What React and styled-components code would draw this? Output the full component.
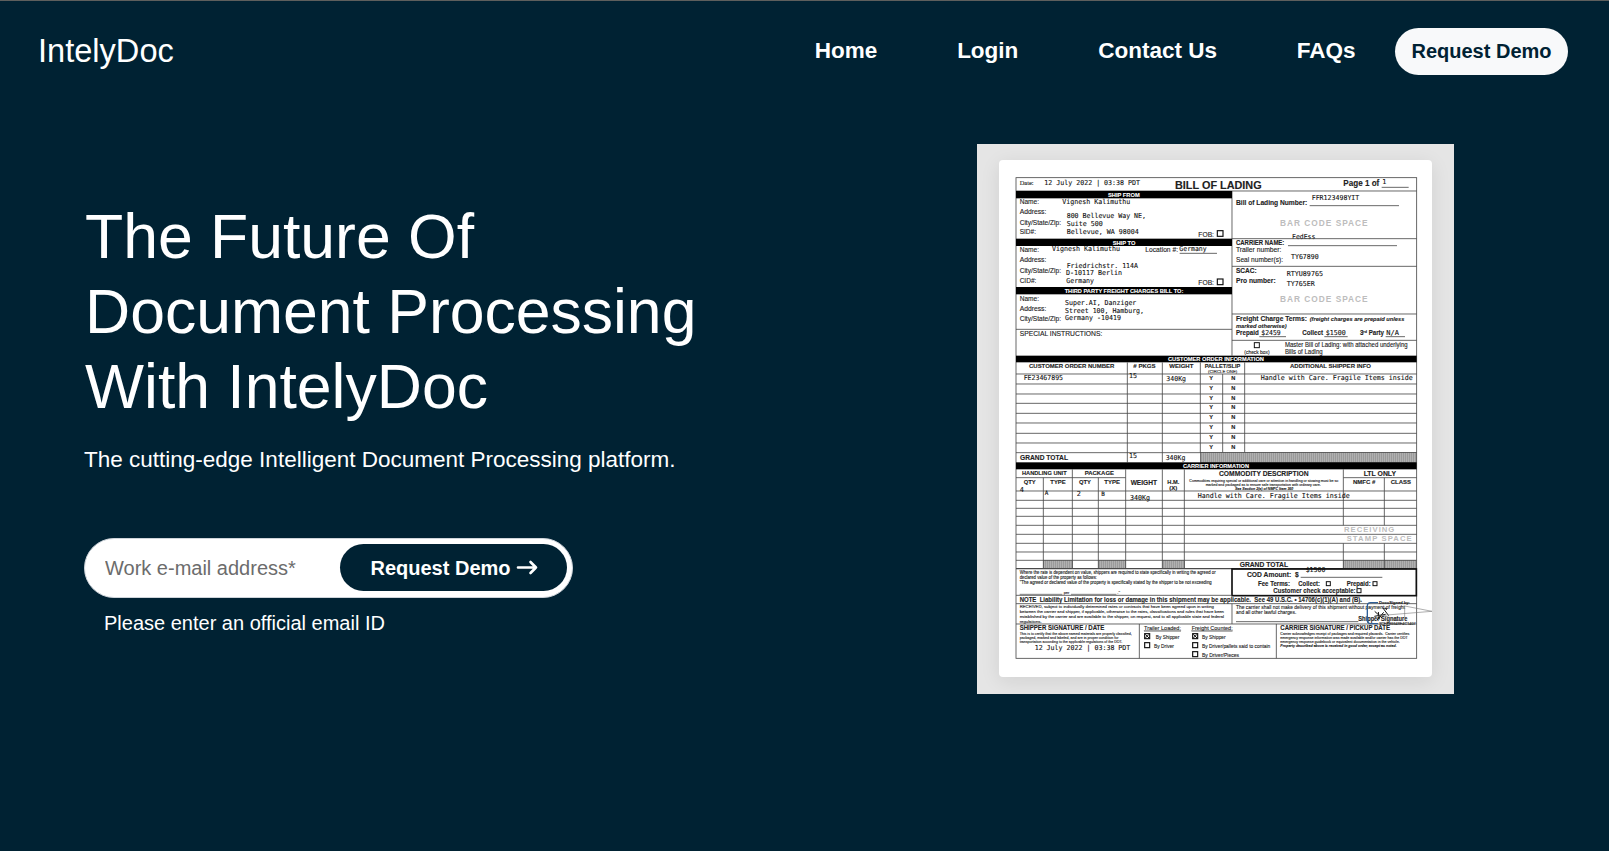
import React from 'react';
import styled, { createGlobalStyle } from 'styled-components';

const NAVY = '#002233';

const GlobalStyle = createGlobalStyle`
  *, *::before, *::after { box-sizing: border-box; }
  body {
    margin: 0;
    background: ${NAVY};
    color: #fff;
    font-family: "Liberation Sans", Arial, sans-serif;
  }
`;

const Page = styled.div`
  height: 851px;
  overflow: hidden;
  border-top: 1px solid #5e5f5d;
  background: ${NAVY};
`;

const Header = styled.header`
  display: flex;
  align-items: center;
  justify-content: space-between;
  height: 100px;
  padding: 0 41px 0 38px;
`;

const Brand = styled.a`
  font-size: 32.6px;
  line-height: 40px;
  color: #fff;
`;

const Nav = styled.nav`
  display: flex;
  align-items: center;
`;

const NavLink = styled.a`
  margin-right: ${(p) => (p.$last ? 39.5 : 79.8)}px;
  font-size: 22.5px;
  font-weight: 700;
  line-height: 30px;
  color: #fff;
`;

const PillButton = styled.button`
  display: flex;
  align-items: center;
  justify-content: center;
  gap: 5px;
  width: ${(p) => p.$width}px;
  height: 47px;
  padding: ${(p) => (p.$light ? '0' : '1px 0 0 1px')};
  border: 0;
  border-radius: 24px;
  background: ${(p) => (p.$light ? '#f8f9fa' : NAVY)};
  color: ${(p) => (p.$light ? NAVY : '#fff')};
  font: 700 20px "Liberation Sans", Arial, sans-serif;
`;

const Hero = styled.main`
  display: flex;
  justify-content: space-between;
  padding: 43px 155px 0 84px;
`;

const Intro = styled.section`
  width: 660px;
  padding-top: 55px;
`;

const Title = styled.h1`
  margin: 0;
  padding-left: 1px;
  font-size: 62.5px;
  font-weight: 400;
  line-height: 75px;
`;

const Lead = styled.p`
  margin: 20px 0 0;
  font-size: 22.5px;
  line-height: 32px;
  white-space: nowrap;
`;

const EmailForm = styled.form`
  display: flex;
  align-items: center;
  justify-content: space-between;
  width: 489px;
  height: 60px;
  margin-top: 62px;
  padding: 0 5px 1px 20px;
  border: 1px solid #ced4da;
  border-radius: 30px;
  background: #fff;
`;

const EmailInput = styled.input`
  width: 220px;
  padding: 2px 0 0;
  border: 0;
  outline: 0;
  background: transparent;
  font: 20px "Liberation Sans", Arial, sans-serif;
  &::placeholder { color: #6c6c6c; opacity: 1; }
`;

const Hint = styled.p`
  margin: 13px 0 0 20px;
  font-size: 20px;
  line-height: 24px;
`;

const Figure = styled.figure`
  display: flex;
  justify-content: center;
  width: 477px;
  height: 550px;
  margin: 0;
  padding-top: 16px;
  background: #e5e5e5;
`;

const Sheet = styled.div`
  width: 433px;
  height: 517px;
  border-radius: 4px;
  background: #fff;
  box-shadow: 0 4px 20px rgba(0, 0, 0, 0.09);
`;

const Drawing = styled.svg`
  display: block;
  width: 433px;
  height: 516.67px;
`;

const FAMILIES = {
  sans: 'Liberation Sans, Arial, sans-serif',
  mono: 'DejaVu Sans Mono, monospace',
  serif: 'Liberation Serif, serif',
};

function T({ x, y, w, s = 20, b, i, f = 'sans', c = '#222', u, children }) {
  return (
    <text
      x={x}
      y={y}
      fontSize={s}
      textLength={w}
      lengthAdjust="spacingAndGlyphs"
      fontWeight={b ? 700 : 400}
      fontStyle={i ? 'italic' : 'normal'}
      fontFamily={FAMILIES[f]}
      textDecoration={u ? 'underline' : undefined}
      fill={c}
      stroke={c}
      strokeWidth="0.35"
    >
      {children}
    </text>
  );
}

const M = (p) => <T s={20.5} f="mono" c="#111" {...p} />;
const B = (p) => <T b {...p} />;
const Stamp = ({ x, y, w, s = 25, children }) => (
  <text x={x} y={y} fontSize={s} fontWeight="700" textLength={w} fontFamily={FAMILIES.sans} fill="#bdbdbd">
    {children}
  </text>
);
const H = ({ y, x1 = 117, x2 = 1319, t = 2.5 }) => (
  <line x1={x1} x2={x2} y1={y} y2={y} stroke="#4a4a4a" strokeWidth={t} />
);
const V = ({ x, y1, y2, t = 2.5 }) => (
  <line x1={x} x2={x} y1={y1} y2={y2} stroke="#4a4a4a" strokeWidth={t} />
);
const Bar = ({ y, x2 = 1319, h = 22 }) => <rect x="117" y={y} width={x2 - 117} height={h} fill="#000" />;
const Box = ({ x, y, s = 17, t = 3.5 }) => (
  <rect x={x + 1} y={y + 1} width={s - 2} height={s - 2} fill="none" stroke="#111" strokeWidth={t} />
);
const Checked = ({ x, y }) => (
  <g>
    <Box x={x} y={y} />
    <path d={`M${x + 3} ${y + 3}l11 11m0-11l-11 11`} stroke="#111" strokeWidth="3" />
  </g>
);
const Hatch = ({ x1, x2, y, h }) => <rect x={x1} y={y} width={x2 - x1} height={h} fill="url(#hatch)" stroke="#4a4a4a" strokeWidth="2" />;

const ORDER_ROWS = [690, 720, 750, 778, 808, 837, 868, 897];
const CARGO_ROWS = [1041, 1069, 1093, 1117, 1144, 1171, 1198, 1224, 1249];

function Parties() {
  return (
    <g>
      <T x={128} y={123} w={42} s={20} f="serif">Date:</T>
      <M x={202} y={123} w={287}>12 July 2022 | 03:38 PDT</M>
      <B x={594} y={134} w={260} s={32.5}>BILL OF LADING</B>
      <B x={1099} y={126} w={108} s={24.5}>Page 1 of</B>
      <M x={1216} y={119}>1</M>
      <H x1={1214} x2={1295} y={130} />
      <H y={141} />
      <V x={765} y1={141} y2={635} />

      <Bar y={141} x2={765} />
      <B x={393} y={159} w={95} s={17.5} c="#fff">SHIP FROM</B>
      <T x={128} y={181} w={58}>Name:</T>
      <M x={256} y={179} w={204}>Vignesh Kalimuthu</M>
      <T x={128} y={211} w={80}>Address:</T>
      <T x={128} y={242} w={124}>City/State/Zip:</T>
      <T x={128} y={271} w={49}>SID#:</T>
      <M x={269} y={223} w={238}>800 Bellevue Way NE,</M>
      <M x={269} y={246} w={108}>Suite 500</M>
      <M x={269} y={269} w={216}>Bellevue, WA 98004</M>
      <T x={664} y={278} w={47}>FOB:</T>
      <Box x={720} y={259} s={19} />

      <Bar y={284} x2={765} />
      <B x={407} y={302} w={68} s={17.5} c="#fff">SHIP TO</B>
      <T x={128} y={325} w={58}>Name:</T>
      <M x={225} y={322} w={204}>Vignesh Kalimuthu</M>
      <T x={505} y={325} w={98}>Location #:</T>
      <M x={607} y={321} w={82}>Germany</M>
      <H x1={608} x2={720} y={328} />
      <T x={128} y={355} w={80}>Address:</T>
      <T x={128} y={386} w={124}>City/State/Zip:</T>
      <T x={128} y={416} w={50}>CID#:</T>
      <M x={269} y={372} w={214}>Friedrichstr. 114A</M>
      <M x={267} y={394} w={168}>D-10117 Berlin</M>
      <M x={268} y={418} w={83}>Germany</M>
      <T x={664} y={422} w={47}>FOB:</T>
      <Box x={720} y={404} s={19} />

      <Bar y={429} x2={765} />
      <B x={263} y={447} w={356} s={17.5} c="#fff">THIRD PARTY FREIGHT CHARGES BILL TO:</B>
      <T x={128} y={470} w={58}>Name:</T>
      <T x={128} y={500} w={80}>Address:</T>
      <T x={128} y={530} w={124}>City/State/Zip:</T>
      <M x={264} y={483} w={214}>Super.AI, Danziger</M>
      <M x={264} y={506} w={237}>Street 100, Hamburg,</M>
      <M x={264} y={529} w={168}>Germany -10419</M>
      <H x2={765} y={556} />
      <T x={128} y={576} w={248}>SPECIAL INSTRUCTIONS:</T>
    </g>
  );
}

function Terms() {
  return (
    <g>
      <B x={777} y={183} w={214} s={21}>Bill of Lading Number:</B>
      <M x={1004} y={168} w={143}>FFR123498YIT</M>
      <H x1={998} x2={1266} y={185} />
      <Stamp x={909} y={246} w={263}>BAR CODE SPACE</Stamp>
      <M x={945} y={285} w={70}>FedEss</M>
      <H x1={765} y={284} />
      <B x={777} y={302} w={145} s={19}>CARRIER NAME:</B>
      <H x1={933} x2={1260} y={305} />
      <T x={777} y={325} w={136}>Trailer number:</T>
      <T x={777} y={354} w={141}>Seal number(s):</T>
      <M x={942} y={345} w={83}>TY67890</M>
      <H x1={765} y={367} />
      <B x={777} y={386} w={62}>SCAC:</B>
      <B x={777} y={416} w={119}>Pro number:</B>
      <M x={929} y={396} w={109}>RTYU89765</M>
      <M x={929} y={426} w={84}>TY765ER</M>
      <Stamp x={909} y={474} w={263}>BAR CODE SPACE</Stamp>
      <H x1={765} y={510} />
      <B x={777} y={531} w={213} s={20.5}>Freight Charge Terms:</B>
      <B x={998} y={530} w={284} s={18} i>(freight charges are prepaid unless</B>
      <B x={777} y={552} w={152} s={18} i>marked otherwise)</B>
      <B x={777} y={574} w={68} s={19}>Prepaid</B>
      <M x={853} y={573} w={58}>$2459</M>
      <H x1={847} x2={927} y={578} />
      <B x={976} y={574} w={62} s={19}>Collect</B>
      <M x={1046} y={572} w={60}>$1500</M>
      <H x1={1042} x2={1112} y={578} />
      <B x={1149} y={574} s={19}>3</B>
      <B x={1159} y={566} s={11}>rd</B>
      <B x={1175} y={574} w={46} s={19}>Party</B>
      <M x={1228} y={574} w={38}>N/A</M>
      <H x1={1226} x2={1284} y={578} />
      <H x1={765} y={589} />
      <Box x={831} y={595} s={17} t={3} />
      <T x={802} y={631} w={76} s={15}>(check box)</T>
      <T x={924} y={608} w={368} s={19}>Master Bill of Lading: with attached underlying</T>
      <T x={924} y={629} w={113} s={19}>Bills of Lading</T>
    </g>
  );
}

function Orders() {
  return (
    <g>
      <Bar y={635} h={20} />
      <B x={573} y={651} w={288} s={17} c="#fff">CUSTOMER ORDER INFORMATION</B>
      <B x={156} y={671} w={256} s={18}>CUSTOMER ORDER NUMBER</B>
      <B x={469} y={671} w={67} s={18}># PKGS</B>
      <B x={577} y={671} w={72} s={18}>WEIGHT</B>
      <B x={683} y={671} w={107} s={18}>PALLET/SLIP</B>
      <T x={693} y={687} w={88} s={13}>(CIRCLE ONE)</T>
      <B x={939} y={672} w={243} s={18}>ADDITIONAL SHIPPER INFO</B>
      {ORDER_ROWS.map((y) => (
        <g key={y}>
          <H y={y} />
          <B x={697} y={y + 18} s={17}>Y</B>
          <B x={763} y={y + 18} s={17}>N</B>
        </g>
      ))}
      <V x={451} y1={655} y2={955} />
      <V x={556} y1={655} y2={955} />
      <V x={670} y1={655} y2={926} />
      <V x={737} y1={690} y2={926} />
      <V x={803} y1={655} y2={926} />
      <H y={926} />
      <M x={140} y={707} w={118}>FE23467895</M>
      <M x={456} y={703} w={24}>15</M>
      <M x={568} y={712} w={59}>340Kg</M>
      <M x={851} y={708} w={456}>Handle with Care. Fragile Items inside</M>
      <B x={129} y={948} w={144}>GRAND TOTAL</B>
      <M x={456} y={943} w={24}>15</M>
      <M x={566} y={947} w={59}>340Kg</M>
      <Hatch x1={670} x2={1319} y={926} h={29} />
    </g>
  );
}

function Cargo() {
  return (
    <g>
      <Bar y={955} h={21} />
      <B x={618} y={972} w={198} s={17} c="#fff">CARRIER INFORMATION</B>
      <B x={135} y={994} w={134} s={18}>HANDLING UNIT</B>
      <B x={323} y={994} w={88} s={18}>PACKAGE</B>
      <H x2={446} y={1001} />
      <B x={140} y={1020} w={36} s={18}>QTY</B>
      <B x={220} y={1020} w={46} s={18}>TYPE</B>
      <B x={306} y={1020} w={36} s={18}>QTY</B>
      <B x={382} y={1020} w={47} s={18}>TYPE</B>
      <B x={461} y={1024} w={79}>WEIGHT</B>
      <B x={571} y={1019} w={36} s={18}>H.M.</B>
      <B x={577} y={1039} w={24} s={18}>(X)</B>
      <B x={726} y={997} w={269} s={21}>COMMODITY DESCRIPTION</B>
      <T x={637} y={1013} w={447} s={11}>Commodities requiring special or additional care or attention in handling or stowing must be so</T>
      <T x={686} y={1025} w={345} s={11}>marked and packaged as to ensure safe transportation with ordinary care.</T>
      <B x={774} y={1037} w={175} s={11} i>See Section 2(e) of NMFC Item 360</B>
      <B x={1160} y={996} w={97}>LTL ONLY</B>
      <H x1={1099} y={1001} />
      <B x={1128} y={1020} w={67} s={18}>NMFC #</B>
      <B x={1241} y={1020} w={61} s={18}>CLASS</B>
      {CARGO_ROWS.map((y) => <H key={y} y={y} />)}
      <V x={199} y1={1001} y2={1273} />
      <V x={286} y1={976} y2={1273} />
      <V x={364} y1={1001} y2={1273} />
      <V x={446} y1={976} y2={1273} />
      <V x={556} y1={976} y2={1273} />
      <V x={622} y1={976} y2={1273} />
      <V x={1099} y1={976} y2={1144} />
      <V x={1222} y1={1001} y2={1144} />
      <V x={1099} y1={1198} y2={1273} />
      <V x={1222} y1={1198} y2={1273} />
      <Hatch x1={199} x2={286} y={1249} h={24} />
      <Hatch x1={364} x2={446} y={1249} h={24} />
      <Hatch x1={556} x2={622} y={1249} h={24} />
      <Hatch x1={1099} x2={1222} y={1249} h={24} />
      <Hatch x1={1222} x2={1319} y={1249} h={24} />
      <M x={128} y={1045}>4</M>
      <M x={203} y={1054} s={18}>A</M>
      <M x={299} y={1057}>2</M>
      <M x={373} y={1056} s={18}>B</M>
      <M x={459} y={1068} w={60}>340Kg</M>
      <M x={662} y={1063} w={456}>Handle with Care. Fragile Items inside</M>
      <Stamp x={1101} y={1164} w={151} s={23}>RECEIVING</Stamp>
      <Stamp x={1109} y={1192} w={195} s={23}>STAMP SPACE</Stamp>
      <B x={788} y={1268} w={145}>GRAND TOTAL</B>
    </g>
  );
}

function Footing() {
  return (
    <g>
      <H y={1274} t={4} />
      <rect x="765" y="1275" width="553" height="80" fill="none" stroke="#111" strokeWidth="5" />
      <B x={810} y={1298} w={155} s={21}>{'COD Amount:\u00a0 $'}</B>
      <M x={986} y={1283} w={59}>$1500</M>
      <H x1={971} x2={1216} y={1300} />
      <B x={843} y={1325} w={96} s={19}>Fee Terms:</B>
      <B x={964} y={1325} w={65} s={19}>Collect:</B>
      <Box x={1047} y={1312} s={14} t={3} />
      <B x={1109} y={1325} w={72} s={19}>Prepaid:</B>
      <Box x={1187} y={1312} s={14} t={3} />
      <B x={889} y={1346} w={247} s={19}>Customer check acceptable:</B>
      <Box x={1139} y={1333} s={14} t={3} />

      <T x={128} y={1290} w={588} s={13.5}>Where the rate is dependent on value, shippers are required to state specifically in writing the agreed or</T>
      <T x={128} y={1305} w={232} s={13.5}>declared value of the property as follows:</T>
      <T x={128} y={1320} w={576} s={13.5}>"The agreed or declared value of the property is specifically stated by the shipper to be not exceeding</T>
      <H x1={128} x2={256} y={1351} t={2} />
      <T x={260} y={1349} w={17} s={13}>per</T>
      <H x1={282} x2={418} y={1351} t={2} />
      <T x={421} y={1349} s={13}>."</T>
      <H y={1354} x2={765} />
      <B x={128} y={1374} w={1027}>{'NOTE\u00a0 Liability Limitation for loss or damage in this shipment may be applicable.\u00a0 See 49 U.S.C. • 14706(c)(1)(A) and (B).'}</B>
      <H y={1379} />

      <T x={128} y={1392} w={583} s={13}>RECEIVED, subject to individually determined rates or contracts that have been agreed upon in writing</T>
      <T x={128} y={1408} w={613} s={13}>between the carrier and shipper, if applicable, otherwise to the rates, classifications and rules that have been</T>
      <T x={128} y={1422} w={613} s={13}>established by the carrier and are available to the shipper, on request, and to all applicable state and federal</T>
      <T x={128} y={1437} w={66} s={13}>regulations.</T>
      <V x={765} y1={1379} y2={1440} />
      <T x={777} y={1394} w={507} s={17}>The carrier shall not make delivery of this shipment without payment of freight</T>
      <T x={777} y={1411} w={181} s={17}>and all other lawful charges.</T>
      <H x1={777} x2={1144} y={1433} />
      <B x={1144} y={1431} w={147} s={19}>Shipper Signature</B>
      <H y={1440} />

      <path d="M1203 1376h-22q-10 0-10 10v43q0 10 10 10h22" fill="none" stroke="#2f5f97" strokeWidth="4" />
      <B x={1206} y={1380} w={93} s={13}>DocuSigned by:</B>
      <T x={1206} y={1443} w={110} s={12}>3CFEB6648E4C1407</T>
      <path
        d="M1193 1402l22 20M1220 1405l-20 23M1204 1404l3 22M1192 1417l34-6M1217 1391l18 24M1222 1393q8-3 6 5"
        fill="none"
        stroke="#111"
        strokeWidth="3"
      />
      <path d="M1205 1415L1365 1402L1283 1386v34M1210 1412l60 18" fill="none" stroke="#777" strokeWidth="1.8" />

      <V x={487} y1={1440} y2={1543} />
      <V x={898} y1={1440} y2={1543} />
      <B x={128} y={1458} w={254} s={19.5}>SHIPPER SIGNATURE / DATE</B>
      <T x={128} y={1473} w={336} s={11.5}>This is to certify that the above named materials are properly classified,</T>
      <T x={128} y={1485} w={296} s={11.5}>packaged, marked and labeled, and are in proper condition for</T>
      <T x={128} y={1497} w={308} s={11.5}>transportation according to the applicable regulations of the DOT.</T>
      <M x={173} y={1519} w={287}>12 July 2022 | 03:38 PDT</M>
      <T x={501} y={1457} w={111} s={18} u>Trailer Loaded:</T>
      <Checked x={502} y={1468} />
      <T x={536} y={1486} w={71} s={17}>By Shipper</T>
      <Box x={502} y={1495} />
      <T x={531} y={1512} w={60} s={17}>By Driver</T>
      <T x={644} y={1457} w={123} s={18} u>Freight Counted:</T>
      <Checked x={646} y={1468} />
      <T x={675} y={1486} w={71} s={17}>By Shipper</T>
      <Box x={646} y={1495} />
      <T x={675} y={1512} w={205} s={17}>By Driver/pallets said to contain</T>
      <Box x={646} y={1522} />
      <T x={675} y={1539} w={111} s={17}>By Driver/Pieces</T>
      <B x={910} y={1458} w={329} s={19.5}>CARRIER SIGNATURE / PICKUP DATE</B>
      <T x={910} y={1473} w={387} s={11.5}>{'Carrier acknowledges receipt of packages and required placards.\u00a0 Carrier certifies'}</T>
      <T x={910} y={1485} w={382} s={11.5}>emergency response information was made available and/or carrier has the DOT</T>
      <T x={910} y={1497} w={358} s={11.5}>emergency response guidebook or equivalent documentation in the vehicle.</T>
      <B x={910} y={1509} w={349} s={11.5} i>Property described above is received in good order, except as noted.</B>
    </g>
  );
}

function BillOfLading() {
  return (
    <Drawing viewBox="66 48 1299 1550" role="img" aria-label="Bill of lading">
      <defs>
        <pattern id="hatch" width="6" height="6" patternUnits="userSpaceOnUse">
          <rect width="6" height="6" fill="#b0b0b0" />
          <rect width="3" height="6" fill="#9a9a9a" />
        </pattern>
      </defs>
      <rect x="117" y="101" width="1202" height="1442" fill="none" stroke="#4a4a4a" strokeWidth="2.5" />
      <Parties />
      <Terms />
      <Orders />
      <Cargo />
      <Footing />
    </Drawing>
  );
}

function Arrow() {
  return (
    <svg width="22" height="16" viewBox="0 0 22 16" fill="none" stroke="#fff" strokeWidth="2.6" strokeLinecap="round" strokeLinejoin="round">
      <path d="M2 7.5H20M14.5 2l5.5 5.5-5.5 5.5" />
    </svg>
  );
}

const LINKS = ['Home', 'Login', 'Contact Us', 'FAQs'];

export default function App() {
  return (
    <Page>
      <GlobalStyle />
      <Header>
        <Brand>IntelyDoc</Brand>
        <Nav>
          {LINKS.map((label, n) => (
            <NavLink key={label} $last={n === LINKS.length - 1}>{label}</NavLink>
          ))}
          <PillButton $light $width={173}>Request Demo</PillButton>
        </Nav>
      </Header>
      <Hero>
        <Intro>
          <Title>
            The Future Of
            <br />
            Document Processing
            <br />
            With IntelyDoc
          </Title>
          <Lead>The cutting-edge Intelligent Document Processing platform.</Lead>
          <EmailForm>
            <EmailInput type="email" placeholder="Work e-mail address*" />
            <PillButton type="button" $width={227}>
              Request Demo
              <Arrow />
            </PillButton>
          </EmailForm>
          <Hint>Please enter an official email ID</Hint>
        </Intro>
        <Figure>
          <Sheet>
            <BillOfLading />
          </Sheet>
        </Figure>
      </Hero>
    </Page>
  );
}
